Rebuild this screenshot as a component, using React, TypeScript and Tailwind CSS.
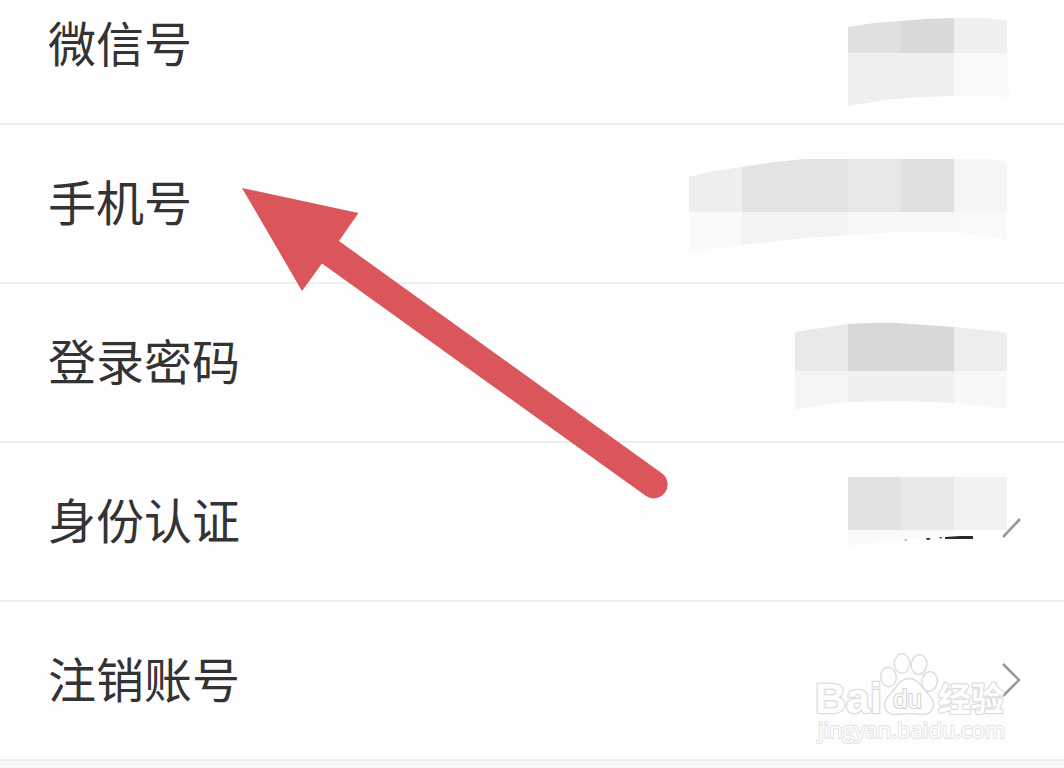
import React from "react";
import clsx from "clsx";

type Block = { points: string; color: string };

type Row = {
  label: string;
  viewBox: string;
  blocks: Block[];
  arrow?: string;
};

const rows: Row[] = [
  {
    label: "微信号",
    viewBox: "680 -34 384 157",
    blocks: [
      { points: "848,27 874,23 901,21 901,53 848,53", color: "#e0e0e0" },
      { points: "901,21 925,19 954,18 954,53 901,53", color: "#dadada" },
      { points: "954,18 982,18 1007,20 1007,53 954,53", color: "#f0f0f0" },
      { points: "848,53 954,53 954,96 920,97 885,100 848,106", color: "#efefef" },
      { points: "954,53 1007,53 1009,97 954,96", color: "#f9f9f9" },
    ],
  },
  {
    label: "手机号",
    viewBox: "680 125 384 157",
    blocks: [
      { points: "1007,162 1036,170 1058,178 1058,240 1025,245 1007,241", color: "#fdfdfd" },
      { points: "689,177 714,171 742,167 742,212 689,212", color: "#eeeeee" },
      { points: "742,167 774,162 805,159 848,159 848,212 742,212", color: "#e3e3e3" },
      { points: "848,159 901,159 901,212 848,212", color: "#e7e7e7" },
      { points: "901,159 954,159 954,212 901,212", color: "#e0e0e0" },
      { points: "954,159 990,159 1007,161 1007,212 954,212", color: "#f6f6f6" },
      { points: "689,212 742,212 742,245 715,249 689,252", color: "#fafafa" },
      { points: "742,212 848,212 848,235 795,239 742,245", color: "#f3f3f3" },
      { points: "848,212 954,212 954,232 900,232 848,235", color: "#f7f7f7" },
      { points: "954,212 1007,212 1007,241 980,235 954,232", color: "#f9f9f9" },
    ],
  },
  {
    label: "登录密码",
    viewBox: "680 284 384 157",
    blocks: [
      { points: "795,332 821,328 848,324 848,371 795,371", color: "#e9e9e9" },
      { points: "848,324 870,323 896,323 925,325 954,327 954,371 848,371", color: "#d8d8d8" },
      { points: "954,327 982,330 1007,333 1007,371 954,371", color: "#ededed" },
      { points: "795,371 848,371 848,402 821,405 795,410", color: "#f5f5f5" },
      { points: "848,371 954,371 954,403 900,401 848,402", color: "#f0f0f0" },
      { points: "954,371 1007,371 1007,409 982,406 954,403", color: "#f8f8f8" },
    ],
  },
  {
    label: "身份认证",
    viewBox: "680 443 384 157",
    blocks: [
      { points: "848,477 901,477 901,530 848,530", color: "#e2e2e2" },
      { points: "901,477 954,477 954,530 901,530", color: "#e8e8e8" },
      { points: "954,477 1007,477 1007,530 954,530", color: "#f2f2f2" },
      { points: "848,530 954,530 954,535 900,539 848,546", color: "#fafafa" },
      // what is left of the status text under the mosaic
      { points: "945,537 960,536 973,536 973,539 945,539", color: "#2b2b2b" },
      { points: "926,538 931,538 929,540 927,540", color: "#3a3a3a" },
      { points: "939,537 942,537 941,539", color: "#3a3a3a" },
      { points: "904,540 907,539 906,541", color: "#777777" },
    ],
    arrow: "M1020 519L1003 537",
  },
  {
    label: "注销账号",
    viewBox: "680 602 384 157",
    blocks: [],
    arrow: "M1003 664L1019 680L1003 696",
  },
];

const Watermark = () => (
  <svg
    viewBox="812 648 200 102"
    width={200}
    height={102}
    role="img"
    aria-label="Baidu 经验"
    className="absolute right-[52px] bottom-[9px] pointer-events-none"
    fill="#fefefe"
    stroke="#dddddd"
    strokeWidth={2}
    strokeLinejoin="round"
  >
    {/* paw */}
    <g strokeWidth={1.4}>
      <ellipse cx="888.5" cy="677" rx="7.8" ry="9.8" transform="rotate(-6 888.5 677)" />
      <ellipse cx="902" cy="663.5" rx="7.8" ry="9.8" />
      <ellipse cx="919" cy="664.5" rx="7.8" ry="9.8" transform="rotate(8 919 664.5)" />
      <ellipse cx="929.5" cy="681.5" rx="7.8" ry="9.8" transform="rotate(8 929.5 681.5)" />
      <path d="M909 678.5C902 678.5 898 684 894.5 689C890 695 884.5 698 884.5 705C884.5 711 889 714.5 895 714.5C900 714.5 904 713.5 909 713.5C914 713.5 918 714.5 923 714.5C929.5 714.5 933.5 710 933.5 704C933.5 698 928 694 924 689C920 684 916 678.5 909 678.5Z" />
    </g>
    <g className="[paint-order:stroke]">
      <text x="815" y="713" fontSize="43" strokeWidth={2.6} className="font-['Liberation_Sans',sans-serif] font-bold">
        Bai
      </text>
      <text x="893" y="708" fontSize="26" stroke="#d0d0d0" className="font-['Liberation_Sans',sans-serif]">
        du
      </text>
      <text x="938" y="711" fontSize="33" strokeWidth={2.4} className="font-['Noto_Sans_CJK_SC',sans-serif] font-bold">
        经验
      </text>
      <text x="818" y="738" fontSize="22" stroke="#e2e2e2" className="font-['Open_Sans',sans-serif]">
        jingyan.baidu.com
      </text>
    </g>
  </svg>
);

const SettingRow = ({ row, last }: { row: Row; last: boolean }) => (
  <li className="relative border-b-2 border-[#eeeeee]">
    <button type="button" className="flex w-full items-center justify-between pl-12 text-left">
      <span className="pb-2 text-5xl text-[#333333]">{row.label}</span>
      <svg viewBox={row.viewBox} width={384} height={157} aria-hidden="true" className="shrink-0">
        {row.blocks.map((block) => (
          <polygon key={block.points} points={block.points} fill={block.color} />
        ))}
        {row.arrow && <path d={row.arrow} fill="none" stroke="#999999" strokeWidth={2.6} />}
      </svg>
    </button>
    {last && <Watermark />}
  </li>
);

const App = () => {
  return (
    <main
      className={clsx(
        "relative min-h-screen overflow-hidden bg-[#f7f7f7]",
        "font-['Noto_Sans_CJK_SC',sans-serif]"
      )}
    >
      {/* list is scrolled a little, the first row is cut at the top */}
      <ul className="-mt-[34px] bg-[#fefefe]">
        {rows.map((row, i) => (
          <SettingRow key={row.label} row={row} last={i === rows.length - 1} />
        ))}
      </ul>

      {/* pointer over the phone number row */}
      <svg
        viewBox="240 184 432 318"
        width={432}
        height={318}
        aria-hidden="true"
        className="absolute top-[184px] left-60 pointer-events-none"
      >
        <path
          d="M242 188L358.5 213L339 241L661.5 473A13.5 13.5 0 0 1 646 496L322 263.5L302 291Z"
          fill="#db565b"
        />
      </svg>
    </main>
  );
};

export default App;
